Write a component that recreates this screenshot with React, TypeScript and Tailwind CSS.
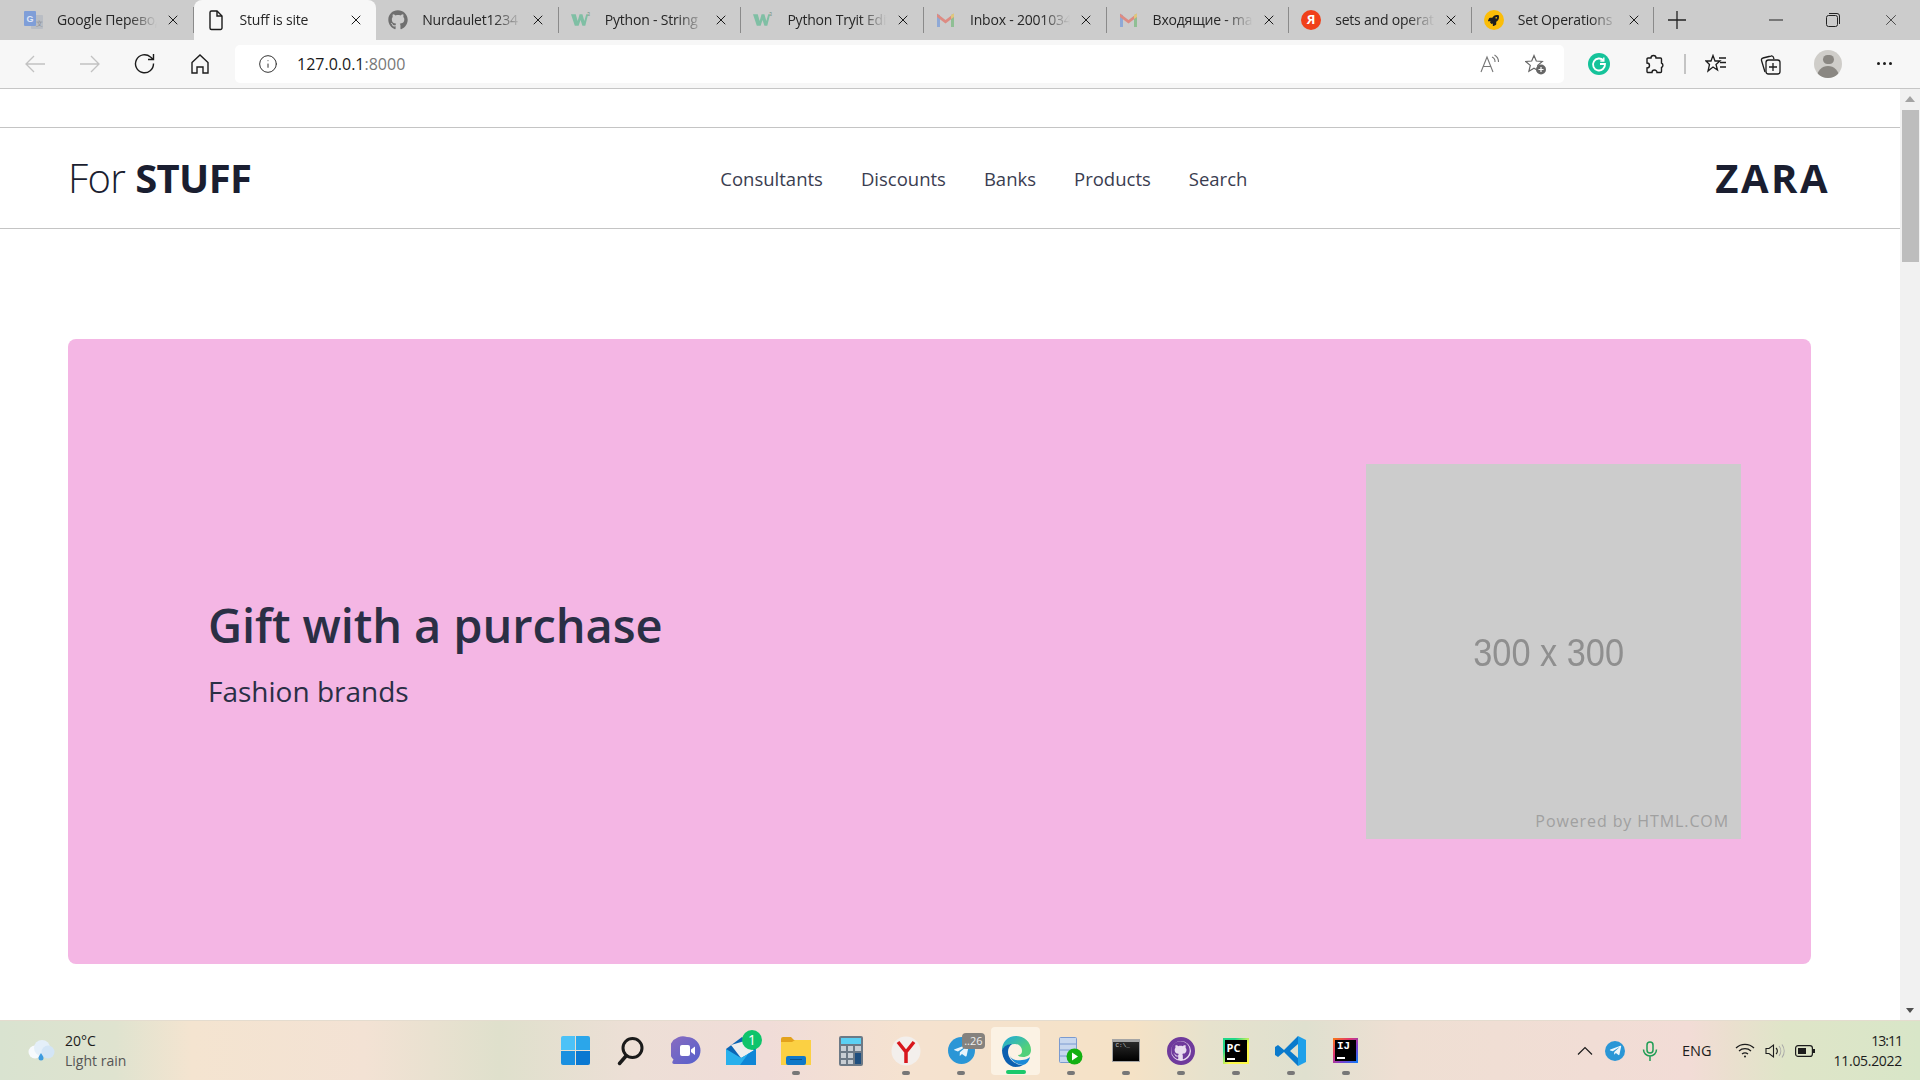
import { FaGithub, FaRocket, FaTelegramPlane } from 'react-icons/fa';
import { Info, X } from 'lucide-react';

const SANS = 'font-["Open_Sans","Noto_Sans",sans-serif]';

interface TabProps {
    title: string;
    icon: React.ReactNode;
    active?: boolean;
}

const GmailIcon = () => (
    <svg width="19" height="16" viewBox="0 0 19 16">
        <path d="M1 15V2l3 1v12z" fill="#8fa9d6" />
        <path d="M18 15V2l-3 1v12z" fill="#8fbf94" />
        <path d="M1 1.500 9.500 8 18 1.500V5l-8.500 6.500L1 5z" fill="#dd8b82" />
        <path d="M15 3l3-1.500V5l-3 2z" fill="#e0c77c" />
    </svg>
);

const W3Icon = () => (
    <svg width="21" height="18" viewBox="0 0 21 18">
        <path d="M0 3h5l2 7 2-7h3l2 7 2-7h2l-3 12h-3l-2-6-2 6H4z" fill="#7fbfa4" />
        <text x="17" y="5" fontSize="5" fill="#6f8f80" fontFamily="Liberation Sans">3</text>
    </svg>
);

const tabs: TabProps[] = [
    {
        title: 'Google Перевод',
        icon: (
            <svg width="20" height="20" viewBox="0 0 20 20">
                <rect x="8" y="5" width="12" height="14" rx="1" fill="#b9bdc4" />
                <rect x="1" y="1" width="12" height="15" rx="1" fill="#7f9ed8" />
                <text x="3.500" y="12" fontSize="9" fontWeight="700" fill="#dfe6f5" fontFamily="Liberation Sans">G</text>
                <text x="13" y="16" fontSize="7" fill="#8a8d93" fontFamily="Liberation Sans">文</text>
            </svg>
        ),
    },
    {
        title: 'Stuff is site',
        active: true,
        icon: (
            <svg width="16" height="22" viewBox="0 0 16 22" fill="none" stroke="#1a1a1a" strokeWidth="1.400">
                <path d="M2 3.500A1.500 1.500 0 0 1 3.500 2H9l5 5v12a1.500 1.500 0 0 1-1.500 1.500h-9A1.500 1.500 0 0 1 2 19z" />
                <path d="M9 2v5h5" />
            </svg>
        ),
    },
    { title: 'Nurdaulet1234', icon: <FaGithub size={20} color="#6f6f6f" /> },
    { title: 'Python - String', icon: <W3Icon /> },
    { title: 'Python Tryit Editor', icon: <W3Icon /> },
    { title: 'Inbox - 20010340', icon: <GmailIcon /> },
    { title: 'Входящие - mail', icon: <GmailIcon /> },
    {
        title: 'sets and operations',
        icon: (
            <div className="flex h-[20px] w-[20px] items-center justify-center rounded-full bg-[#f0401a] text-[13px] font-bold text-white">
                Я
            </div>
        ),
    },
    {
        title: 'Set Operations',
        icon: (
            <div className="flex h-[20px] w-[20px] items-center justify-center rounded-full bg-[#fbbd08]">
                <FaRocket size={11} color="#1e1e1e" />
            </div>
        ),
    },
];

function Tab({ title, icon, active }: TabProps) {
    return (
        <div
            className={`flex h-[40px] w-[182.600px] shrink-0 items-center pl-[12px] pr-[8px] ${
                active ? 'rounded-t-[8px] bg-[#f7f7f7]' : 'border-r border-r-[#8a8a8a] [border-image:linear-gradient(transparent_20%,#8a8a8a_20%,#8a8a8a_80%,transparent_80%)_1]'
            }`}
        >
            <div className="flex w-[20px] shrink-0 items-center justify-center">{icon}</div>
            <div className="ml-[14px] w-[100px] overflow-hidden whitespace-nowrap text-[14px] leading-[40px] tracking-[-0.2px] text-[#262626] [mask-image:linear-gradient(to_right,#000_72%,transparent_100%)]">
                {title}
            </div>
            <div className="ml-[6px] flex h-[20px] w-[20px] items-center justify-center">
                <X size={16} strokeWidth={1.5} color="#1a1a1a" />
            </div>
        </div>
    );
}

function TabStrip() {
    return (
        <div className="flex h-[40px] shrink-0 items-center bg-[#cccccc] pl-[11px] text-[#262626]">
            {tabs.map((tab) => (
                <Tab key={tab.title} {...tab} />
            ))}
            <svg className="ml-[14px]" width="18" height="18" viewBox="0 0 18 18" stroke="#222" strokeWidth="1.300">
                <path d="M9 0v18M0 9h18" />
            </svg>
            <div className="ml-auto flex items-center">
                <svg width="14" height="2" viewBox="0 0 14 2"><path d="M0 1h14" stroke="#222" /></svg>
                <svg className="ml-[43px]" width="14" height="14" viewBox="0 0 14 14" fill="none" stroke="#222">
                    <rect x="0.500" y="2.500" width="11" height="11" rx="2" />
                    <path d="M3 .5h8a2.500 2.500 0 0 1 2.500 2.500v8" />
                </svg>
                <X className="ml-[42px] mr-[20px]" size={18} strokeWidth={1} color="#222" />
            </div>
        </div>
    );
}

function Toolbar() {
    return (
        <div className="flex h-[49px] shrink-0 items-center border-b border-b-[#c6c6c6] bg-[#f7f7f7] pb-[1px]">
            <div className="flex w-[235px] shrink-0 items-center pl-[24px]">
                <svg width="22" height="20" viewBox="0 0 22 20" fill="none" stroke="#c2c2c2" strokeWidth="1.300">
                    <path d="M21 10H2M10 2l-8 8 8 8" />
                </svg>
                <svg className="ml-[33px]" width="22" height="20" viewBox="0 0 22 20" fill="none" stroke="#c2c2c2" strokeWidth="1.300">
                    <path d="M1 10h19M12 2l8 8-8 8" />
                </svg>
                <svg className="ml-[33px]" width="22" height="22" viewBox="0 0 22 22" fill="none" stroke="#1c1c1c" strokeWidth="1.400">
                    <path d="M19.500 10.500a9 9 0 1 1-3-6.500l3 2.500M19.500 1v5.500H14" />
                </svg>
                <svg className="ml-[34px]" width="20" height="22" viewBox="0 0 20 22" fill="none" stroke="#1c1c1c" strokeWidth="1.400">
                    <path d="M2 9.500 10 2l8 7.500V20h-5v-6H7v6H2z" />
                </svg>
            </div>
            <div className="flex h-[38px] w-[1329px] shrink-0 items-center rounded-[5px] bg-white pl-[23px]">
                <Info size={20} strokeWidth={1.200} color="#333" />
                <div className="ml-[19px] text-[16px] text-[#1a1a1a]">
                    127.0.0.1<span className="text-[#777]">:8000</span>
                </div>
                <div className="ml-auto flex items-center pr-[17px]">
                    <svg width="20" height="20" viewBox="0 0 20 20" fill="none" stroke="#777" strokeWidth="1.100">
                        <path d="M1 18 7 3l6 15M3.500 12.500h7" />
                        <path d="M12 3a5 5 0 0 1 3 5M14.500 1a8 8 0 0 1 4 7" />
                    </svg>
                    <svg className="ml-[25px]" width="22" height="22" viewBox="0 0 22 22">
                        <path d="M9 2.500 11.300 8l6 .5-4.600 3.900 1.400 5.800L9 15.200 3.900 18.200l1.400-5.800L.7 8.500l6-.5z" fill="none" stroke="#666" strokeWidth="1.200" />
                        <circle cx="16" cy="16.500" r="5" fill="#666" />
                        <path d="M16 14v5M13.500 16.500h5" stroke="#fff" strokeWidth="1.200" />
                    </svg>
                </div>
            </div>
            <div className="flex flex-1 items-center">
                <svg className="ml-[24px]" width="22" height="22" viewBox="0 0 22 22">
                    <circle cx="11" cy="11" r="11" fill="#15c39a" />
                    <path d="M15.500 7.500A6 6 0 1 0 17 11h-5" fill="none" stroke="#fff" strokeWidth="1.800" />
                    <path d="M15.800 4.500v3.500h-3.500" fill="none" stroke="#fff" strokeWidth="1.400" />
                </svg>
                <svg className="ml-[34px]" width="20" height="20" viewBox="0 0 20 20" fill="none" stroke="#1c1c1c" strokeWidth="1.400">
                    <path d="M7 4a2.500 2.500 0 0 1 5 0h4.500a1 1 0 0 1 1 1v4a2.500 2.500 0 0 1 0 4.500v4a1 1 0 0 1-1 1h-3.500a2.500 2.500 0 0 0-5 0H4a1 1 0 0 1-1-1v-3.500a2.500 2.500 0 0 0 0-5V5a1 1 0 0 1 1-1z" />
                </svg>
                <div className="ml-[20px] h-[20px] w-[2px] bg-[#c4c4c4]" />
                <svg className="ml-[19px]" width="22" height="20" viewBox="0 0 22 20" fill="none" stroke="#1c1c1c" strokeWidth="1.300">
                    <path d="M8 1.500 10 7h5l-4 3.500 1.500 5.500L8 13l-5 4 1.500-6.500L1 7h5z" />
                    <path d="M14 4h7M15 8.500h6M15 13h6" />
                </svg>
                <svg className="ml-[32px]" width="22" height="22" viewBox="0 0 22 22" fill="none" stroke="#1c1c1c" strokeWidth="1.300">
                    <path d="M6 19 2.500 7.500A2 2 0 0 1 4 5l8-2a2 2 0 0 1 2.500 1.500L15 6" />
                    <rect x="7" y="7" width="14" height="14" rx="2.500" />
                    <path d="M14 10v8M10 14h8" />
                </svg>
                <div className="ml-[33px] flex h-[28px] w-[28px] flex-col items-center overflow-hidden rounded-full bg-[#cfcdc9]">
                    <div className="mt-[5px] h-[11px] w-[11px] rounded-full bg-[#8a8782]" />
                    <div className="mt-[2px] h-[14px] w-[22px] rounded-t-full bg-[#8a8782]" />
                </div>
                <div className="ml-[35px] flex gap-[3px]">
                    <div className="h-[3px] w-[3px] rounded-full bg-[#1c1c1c]" />
                    <div className="h-[3px] w-[3px] rounded-full bg-[#1c1c1c]" />
                    <div className="h-[3px] w-[3px] rounded-full bg-[#1c1c1c]" />
                </div>
            </div>
        </div>
    );
}

function Scrollbar() {
    return (
        <div className="flex w-[20px] shrink-0 flex-col items-center bg-[#f1f1f1]">
            <div className="mt-[7px] h-0 w-0 border-x-[5px] border-b-[6px] border-x-transparent border-b-[#a3a3a3]" />
            <div className="mt-[8px] h-[152px] w-[17px] bg-[#bdbdbd]" />
            <div className="mt-auto mb-[7px] h-0 w-0 border-x-[4px] border-t-[5px] border-x-transparent border-t-[#505050]" />
        </div>
    );
}

function Page() {
    return (
        <div className={`flex min-h-0 flex-1 ${SANS}`}>
            <div className="min-w-0 flex-1 overflow-hidden bg-white">
                <div className="h-[39px] border-b border-b-[#c4c4c4]" />
                <header className="flex h-[101px] items-center justify-between border-b border-b-[#c4c4c4] pl-[68px] pr-[70px] text-[#1a1e30]">
                    <div className="text-[40px] tracking-[-0.6px]">
                        <span className="font-light">For</span> <span className="font-bold">STUFF</span>
                    </div>
                    <nav className="ml-[1px] mt-[2px] flex gap-[38px] text-[18.500px] text-[#3a3d50]">
                        <span>Consultants</span>
                        <span>Discounts</span>
                        <span>Banks</span>
                        <span>Products</span>
                        <span>Search</span>
                    </nav>
                    <div className="text-[40px] font-bold tracking-[2.500px]">ZARA</div>
                </header>
                <section className="ml-[68px] mt-[110px] flex h-[625px] w-[1743px] items-center justify-between rounded-[8px] bg-[#f4b6e4] pl-[140px] pr-[70px] text-[#2a2f45]">
                    <div className="mt-[3px]">
                        <h1 className="text-[47px] font-semibold leading-[60px] tracking-[-0.1px]">Gift with a purchase</h1>
                        <p className="mt-[16px] text-[28px] leading-[40px]">Fashion brands</p>
                    </div>
                    <div className="relative flex h-[375px] w-[375px] items-center justify-center bg-[#cccccc] pr-[10px] pt-[4px]">
                        <span className="scale-x-[0.88] font-['Liberation_Sans',sans-serif] text-[39px] text-[#8f8f8f]">300 x 300</span>
                        <span className="absolute bottom-[6px] right-[12px] text-[16px] tracking-[0.9px] text-[#a0a0a0]">Powered by HTML.COM</span>
                    </div>
                </section>
            </div>
            <Scrollbar />
        </div>
    );
}

function TaskIcon({ children, dot, active }: { children: React.ReactNode; dot?: boolean; active?: boolean }) {
    return (
        <div className="relative flex h-[48px] w-[55px] items-center justify-center">
            {active && <div className="absolute inset-y-0 left-[3px] w-[49px] rounded-[4px] bg-[#fbf2e4]" />}
            <div className="relative flex h-[32px] w-[32px] items-center justify-center">{children}</div>
            {dot && <div className="absolute bottom-[0px] h-[4px] w-[8px] rounded-full bg-[#777]" />}
            {active && <div className="absolute bottom-[1px] h-[4px] w-[20px] rounded-full bg-[#1bc96b]" />}
        </div>
    );
}

function Taskbar() {
    return (
        <div className="flex h-[60px] shrink-0 items-center border-t border-t-[#e4dccf] bg-[linear-gradient(90deg,#d9e3d0_0%,#dfe3cf_6%,#f4e4d0_10%,#f3e2d4_19%,#dfe0cc_26%,#eddfd6_33%,#f0dcd8_40%,#f5e2d0_47%,#f5e2c6_59%,#e6e2cd_63%,#dfe0cf_68%,#efdfd3_73%,#f2dcd6_88%,#ebdfcf_90%,#dfe5c8_93%,#d8e6c8_100%)] font-['Open_Sans',sans-serif] text-[#1c1c1c]">
            <div className="flex w-[548px] shrink-0 items-center pl-[27px]">
                <svg width="28" height="26" viewBox="0 0 28 26">
                    <circle cx="8" cy="14" r="6.500" fill="#f7fafd" />
                    <circle cx="15" cy="10" r="8" fill="#e4eff9" />
                    <circle cx="21" cy="14" r="6.500" fill="#d3e5f6" />
                    <path d="M14 15c2 3 2.500 4 2.500 5a2.500 2.500 0 0 1-5 0c0-1 .5-2 2.500-5z" fill="#3d9be0" />
                </svg>
                <div className="ml-[10px] text-[14px] leading-[20px]">
                    <div>20°C</div>
                    <div className="text-[#555]">Light rain</div>
                </div>
            </div>
            <div className="flex items-center">
                <TaskIcon>
                    <div className="grid h-[29px] w-[29px] grid-cols-2 gap-[1px]">
                        <div className="rounded-tl-[2px] bg-[#4cc2f7]" />
                        <div className="rounded-tr-[2px] bg-[#2ba6ea]" />
                        <div className="rounded-bl-[2px] bg-[#1a90e0]" />
                        <div className="rounded-br-[2px] bg-[#0a78d1]" />
                    </div>
                </TaskIcon>
                <TaskIcon>
                    <svg width="28" height="30" viewBox="0 0 28 30" fill="none" stroke="#1a1a1a">
                        <circle cx="15.500" cy="12" r="9.500" strokeWidth="3" />
                        <path d="M9 20 2.500 27.500" strokeWidth="3.500" strokeLinecap="round" />
                    </svg>
                </TaskIcon>
                <TaskIcon>
                    <svg width="30" height="30" viewBox="0 0 30 30">
                        <defs>
                            <linearGradient id="meetA" x1="0" y1="0" x2="1" y2="1">
                                <stop offset="0" stopColor="#8a6cc0" />
                                <stop offset="1" stopColor="#5560cc" />
                            </linearGradient>
                        </defs>
                        <path d="M16 1a13.500 13.500 0 0 1 0 27H3c-1.500 0-2-1-1.500-2.500l1-2A13.500 13.500 0 0 1 16 1z" fill="url(#meetA)" />
                        <rect x="9" y="9" width="10" height="11" rx="2" fill="#fff" />
                        <path d="m20 13.500 4-3v8.500l-4-3z" fill="#fff" />
                    </svg>
                </TaskIcon>
                <TaskIcon>
                    <svg className="translate-x-[5px] overflow-visible" width="40" height="40" viewBox="0 0 40 40">
                        <path d="M0 18 16 6l14 10v18H0z" fill="#0b66b5" />
                        <path d="M5 14 22 9l6 11-13 7z" fill="#eeeeee" />
                        <path d="M0 18l15 9 15-9v16H0z" fill="#28b0ec" />
                        <path d="M30 34H14l8-11 8-5z" fill="#0f86d6" />
                        <circle cx="26" cy="9" r="10" fill="#0fc46b" />
                        <text x="26" y="14" textAnchor="middle" fontSize="14" fill="#fff" fontFamily="Open Sans">1</text>
                    </svg>
                </TaskIcon>
                <TaskIcon dot>
                    <svg width="30" height="28" viewBox="0 0 30 28">
                        <path d="M0 2a2 2 0 0 1 2-2h8l3 3h17v6H0z" fill="#e3a21c" />
                        <path d="M0 5h11l3-2h16v25H0z" fill="#fbd043" />
                        <rect x="5" y="19" width="20" height="9" rx="2" fill="#0f78c8" />
                        <path d="M9 22.500h12" stroke="#08548f" strokeWidth="1" />
                    </svg>
                </TaskIcon>
                <TaskIcon>
                    <svg width="24" height="30" viewBox="0 0 24 30">
                        <rect width="24" height="30" rx="2" fill="#6c7986" />
                        <rect x="2" y="2" width="20" height="6" fill="#5bd0f4" />
                        <path d="M2 10h5v5H2zm7 0h5v5H9zm7 0h6v5h-6zM2 17h5v5H2zm7 0h5v5H9zM2 24h5v4H2zm7 0h5v4H9z" fill="#c8ced4" />
                        <rect x="16" y="17" width="6" height="11" fill="#1f4f7f" />
                    </svg>
                </TaskIcon>
                <TaskIcon dot>
                    <svg width="30" height="30" viewBox="0 0 30 30">
                        <circle cx="15" cy="15" r="14.500" fill="#f3efec" />
                        <path d="M7 6l8 10 8-10M15 16v11" fill="none" stroke="#d8171d" strokeWidth="3.500" />
                    </svg>
                </TaskIcon>
                <TaskIcon dot>
                    <div className="absolute left-[3px] flex h-[27px] w-[27px] items-center justify-center rounded-full bg-[#2a96d6]">
                        <FaTelegramPlane size={17} color="#e7f4fb" />
                    </div>
                    <div className="absolute right-[-8px] top-[-2px] rounded-[4px] bg-[#85827e] px-[2px] text-[11px] leading-[16px] text-[#eee]">..26</div>
                </TaskIcon>
                <TaskIcon active>
                    <svg width="30" height="32" viewBox="0 0 30 32">
                        <defs>
                            <linearGradient id="edgeA" x1="0" y1="0" x2="1" y2="1">
                                <stop offset="0" stopColor="#1ea7e0" />
                                <stop offset="0.7" stopColor="#52d07a" />
                            </linearGradient>
                        </defs>
                        <path d="M1 15C1 7 7 1 15 1c8 0 15 6 15 14 0 5-4 7-8 7-3 0-5-1-5-2 3 0 4-2 4-4 0-5-4-7-7-7-7 0-11 3-13 6z" fill="url(#edgeA)" />
                        <path d="M1 15c2-4 6-6 10-6-3 2-4 5-4 8 0 6 6 13 15 13-2 1-4 2-7 2C7 32 1 24 1 15z" fill="#0b5fb0" />
                        <path d="M22 30c-5 0-11-3-13-9 2 4 7 5 12 4 3 0 6-1 8-3-1 4-3 7-7 8z" fill="#1b8ad8" />
                    </svg>
                </TaskIcon>
                <TaskIcon dot>
                    <svg width="24" height="28" viewBox="0 0 24 28">
                        <rect x="0.500" y="0.500" width="17" height="25" rx="1" fill="#c7d7ee" stroke="#7a9ad0" />
                        <path d="M0 7h18M0 13h18M0 19h18" stroke="#7a9ad0" />
                        <circle cx="15.500" cy="19.500" r="8" fill="#12b012" />
                        <path d="M13 15.500v8l6-4z" fill="#fff" />
                    </svg>
                </TaskIcon>
                <TaskIcon dot>
                    <div className="h-[23px] w-[28px] border-[1px] border-t-[3px] border-[#a5a5a5] bg-[linear-gradient(180deg,#2a2a2a,#000)] pl-[3px] font-['Liberation_Mono',monospace] text-[6px] leading-[8px] text-[#ccc]">
                        C:\_
                    </div>
                </TaskIcon>
                <TaskIcon dot>
                    <div className="flex h-[28px] w-[28px] items-center justify-center rounded-full border-[4px] border-[#6f3a9c] bg-[#e9dcef]">
                        <FaGithub size={19} color="#6f3a9c" />
                    </div>
                </TaskIcon>
                <TaskIcon dot>
                    <div className="h-[26px] w-[26px] bg-[linear-gradient(135deg,#21d789_0%,#21d789_25%,#fcf84a_60%,#fcf84a_100%)] p-[2px]">
                        <div className="flex h-full w-full flex-col justify-between bg-black p-[2px] text-[11px] font-bold leading-[11px] text-white">
                            <span>PC</span>
                            <div className="h-[2px] w-[8px] bg-white" />
                        </div>
                    </div>
                </TaskIcon>
                <TaskIcon dot>
                    <svg width="32" height="32" viewBox="0 0 32 32">
                        <path d="M23 1l-14 14-6-5-3 2v8l3 2 6-5 14 14 0-8-8-7 8-7z" fill="#0a7acc" />
                        <path d="M23 1l8 4v22l-8 4z" fill="#1ea0ea" />
                    </svg>
                </TaskIcon>
                <TaskIcon dot>
                    <div className="h-[25px] w-[25px] bg-[linear-gradient(135deg,#f97a12_0%,#e0356f_35%,#7a3fd0_65%,#087cfa_100%)] p-[2px]">
                        <div className="flex h-full w-full flex-col justify-between bg-black px-[2px] py-[1px] font-['Liberation_Mono',monospace] text-[11px] font-bold leading-[11px] text-white">
                            <span>IJ</span>
                            <div className="mb-[1px] h-[2px] w-[8px] bg-white" />
                        </div>
                    </div>
                </TaskIcon>
            </div>
            <div className="ml-auto flex items-center pr-[18px]">
                <svg width="16" height="9" viewBox="0 0 16 9" fill="none" stroke="#1c1c1c" strokeWidth="1.200">
                    <path d="M1 8.500 8 1.500l7 7" />
                </svg>
                <div className="ml-[12px] flex h-[20px] w-[20px] items-center justify-center rounded-full bg-[#2a96d6]">
                    <FaTelegramPlane size={13} color="#eef7fb" />
                </div>
                <svg className="ml-[17px]" width="16" height="20" viewBox="0 0 16 20" fill="none" stroke="#1f9d55" strokeWidth="1.500">
                    <rect x="5" y="1" width="6" height="11" rx="3" />
                    <path d="M1.500 8.500a6.500 6.500 0 0 0 13 0M8 15v5" />
                </svg>
                <div className="ml-[24px] text-[14.500px]">ENG</div>
                <svg className="ml-[23px]" width="20" height="15" viewBox="0 0 20 15" fill="none" stroke="#1c1c1c" strokeWidth="1.300">
                    <path d="M1 5a13 13 0 0 1 18 0M4 8a9 9 0 0 1 12 0M7 11a5 5 0 0 1 6 0" />
                    <circle cx="10" cy="13.500" r="1" fill="#1c1c1c" stroke="none" />
                </svg>
                <svg className="ml-[10px]" width="20" height="16" viewBox="0 0 20 16" fill="none" stroke="#1c1c1c" strokeWidth="1.100">
                    <path d="M1 5.500h3L8.500 2v12L4 10.500H1z" />
                    <path d="M11 5a4 4 0 0 1 0 6" />
                    <path d="M14 3a8 8 0 0 1 0 10M17 1.500a11 11 0 0 1 0 13" stroke="#a8a8a8" />
                </svg>
                <svg className="ml-[10px]" width="20" height="12" viewBox="0 0 20 12">
                    <rect x="0.600" y="0.600" width="16.800" height="10.800" rx="2.500" fill="none" stroke="#1c1c1c" strokeWidth="1.200" />
                    <rect x="3" y="3" width="8" height="6" fill="#1c1c1c" />
                    <rect x="18" y="4" width="2" height="4" fill="#1c1c1c" />
                </svg>
                <div className="ml-[19px] text-right text-[14px] leading-[20px] tracking-[-0.3px]">
                    <div className="tracking-[-1px]">13:11</div>
                    <div>11.05.2022</div>
                </div>
            </div>
        </div>
    );
}

function App() {
    return (
        <div className={`flex h-screen flex-col overflow-hidden ${SANS}`}>
            <TabStrip />
            <Toolbar />
            <Page />
            <Taskbar />
        </div>
    );
}

export default App;
